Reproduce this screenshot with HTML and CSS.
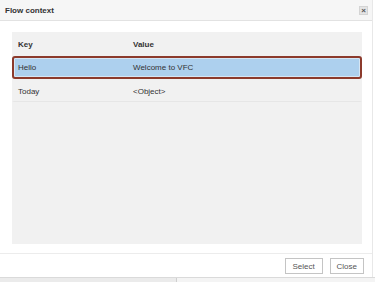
FILE: index.html
```html
<!doctype html>
<html lang="en">
<head>
	<meta charset="UTF-8">
	<title>Flow context</title>
	<link rel="stylesheet" href="styles.css">
</head>
<body>
	<div class="dialog">
		<div class="dialog-header">
			<span class="dialog-title">Flow context</span>
			<span class="dialog-close">&#215;</span>
		</div>
		<div class="dialog-body">
			<div class="grid">
				<div class="row head">
					<div class="cell key">Key</div>
					<div class="cell">Value</div>
				</div>
				<div class="row selected">
					<div class="cell key">Hello</div>
					<div class="cell">Welcome to VFC</div>
				</div>
				<div class="row">
					<div class="cell key">Today</div>
					<div class="cell">&lt;Object&gt;</div>
				</div>
			</div>
		</div>
		<div class="dialog-footer">
			<button class="btn btn-select">Select</button>
			<button class="btn">Close</button>
		</div>
	</div>
	<div class="under">
		<div class="under-left"></div>
		<div class="under-right"></div>
	</div>
</body>
</html>
```

FILE: styles.css
```css
body {
	margin: 0;
	background: #fff;
	font-family: "Liberation Sans", Arial, sans-serif;
	font-size: 8px;
	color: #333;
}

.dialog { width: 372px; border-right: 1px solid #e8e8e8; }

.dialog-header {
	display: flex;
	align-items: center;
	justify-content: space-between;
	height: 20px;
	padding: 0 4px 0 5px;
	background: #f6f6f6;
	border-bottom: 1px solid #e2e2e2;
}
.dialog-title { font-weight: bold; color: #333; }
.dialog-close {
	width: 9px; height: 9px;
	line-height: 8px;
	text-align: center;
	font-size: 8px;
	font-weight: bold;
	color: #555;
	background: #e4e4e4;
	border: 1px solid #d4d4d4;
	box-sizing: border-box;
}

.dialog-body { padding: 11px 10px 9px 12px; }

.grid {
	height: 212px;
	background: #f1f1f1;
}
.row {
	display: flex;
	align-items: center;
	height: 23px;
	border: 2px solid transparent;
	border-bottom: 1px solid #e6e6e6;
	box-sizing: border-box;
}
.row.head { height: 24px; font-weight: bold; border-bottom-color: transparent; }
.row.selected {
	border: 2px solid #8c3a2c;
	border-radius: 3px;
	background: #add0ee;
	box-shadow: inset 0 0 0 1px #d6e6f4;
}
.cell { padding-left: 4px; }
.cell.key { width: 111px; }

.dialog-footer {
	display: flex;
	justify-content: flex-end;
	gap: 7px;
	height: 24px;
	padding: 4px 8px 0 0;
	border-top: 1px solid #ececec;
	box-sizing: border-box;
}
.btn {
	height: 16px;
	padding: 0 6px;
	font-family: "Liberation Sans", Arial, sans-serif;
	font-size: 8px;
	color: #555;
	background: #fff;
	border: 1px solid #c4c4c4;
}
.btn-select { min-width: 38px; }

.under { display: flex; height: 4px; border-top: 1px solid #dadada; }
.under-left { width: 176px; background: #ebebeb; border-right: 1px solid #cfcfcf; }
.under-right { flex: 1; background: #f4f4f4; }
```
